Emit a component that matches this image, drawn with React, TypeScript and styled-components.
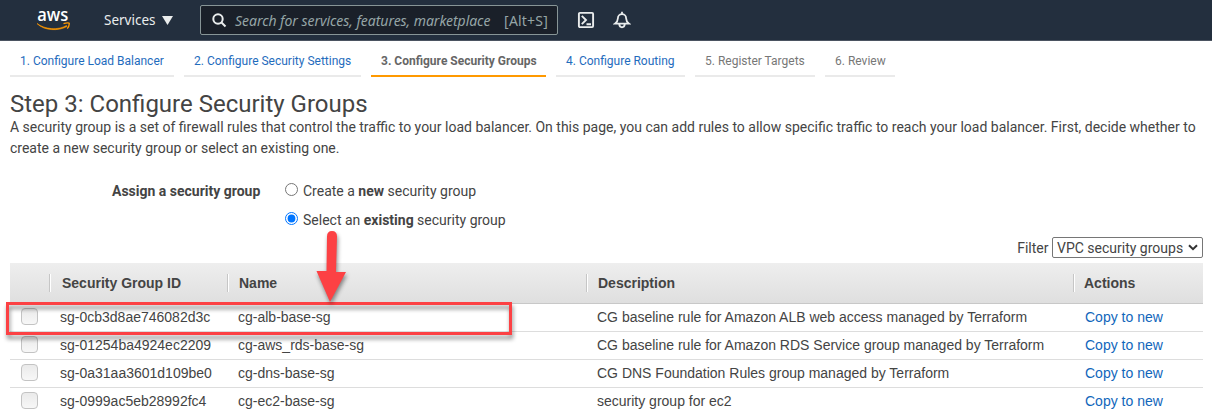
import React from "react";
import styled, { createGlobalStyle } from "styled-components";

const Global = createGlobalStyle`
  * { box-sizing: border-box; }
  html, body { margin: 0; height: 413px; overflow: hidden; background: #fff; }
  body { font-family: Roboto, "Liberation Sans", sans-serif; font-size: 14px; color: #444; }
`;

const Page = styled.div`
  position: relative;
  width: 1212px;
  height: 413px;
  overflow: hidden;
`;

const TopBar = styled.header`
  height: 41px;
  display: flex;
  align-items: center;
  background: #232f3e;
  border-bottom: 1px solid #4b5461;
  padding-left: 36px;
  font-family: "Noto Sans", "Open Sans", sans-serif;
  color: #eaeded;
`;

const Logo = styled.svg`
  width: 36px;
  height: 26px;
  margin-right: 32px;
  flex: none;
  overflow: visible;
`;

const Services = styled.div`
  display: flex;
  align-items: center;
  width: 96px;
  height: 40px;
  font-size: 13.500px;
  svg { margin-left: 6px; }
`;

const SearchBox = styled.div`
  display: flex;
  align-items: center;
  width: 358px;
  height: 30px;
  background: #1a2029;
  border: 1px solid #879596;
  border-radius: 2px;
  padding: 0 9px 0 11px;
  font-size: 14px;
  color: #95a5a6;
`;

const Placeholder = styled.span`
  width: 258px;
  margin-left: 8px;
  white-space: nowrap;
  font-style: italic;
  letter-spacing: -0.04px;
`;

const Shortcut = styled.span`
  margin-left: auto;
  font-size: 14px;
  letter-spacing: 0.2px;
`;

const TopIcon = styled.svg<{ $gap: number }>`
  width: 18px;
  height: 18px;
  margin-left: ${(p) => p.$gap}px;
  flex: none;
`;

const Steps = styled.nav`
  display: flex;
  gap: 10px;
  padding: 5px 0 0 10px;
`;

const Step = styled.div<{ $w: number; $state: "link" | "active" | "todo" }>`
  width: ${(p) => p.$w}px;
  height: 31px;
  padding-left: 10px;
  line-height: 30px;
  white-space: nowrap;
  font-size: 12px;
  font-weight: ${(p) => (p.$state === "active" ? 700 : 400)};
  color: ${(p) => (p.$state === "link" ? "#1f6cbd" : p.$state === "active" ? "#666" : "#777")};
  border-bottom: 2px solid ${(p) => (p.$state === "active" ? "#f90" : "#eaeaea")};
`;

const Title = styled.h1`
  margin: 14px 0 0 10px;
  height: 26px;
  line-height: 27px;
  font-size: 24px;
  font-weight: 400;
`;

const Intro = styled.p`
  margin: 0 0 0 10px;
  line-height: 21px;
  white-space: nowrap;
  font-size: 14px;
`;

const Form = styled.div`
  display: flex;
  margin-top: 22px;
  height: 58px;
`;

const FormLabel = styled.div`
  width: 285px;
  padding-left: 112px;
  line-height: 20px;
  font-weight: 700;
  white-space: nowrap;
`;

const Options = styled.div`
  display: flex;
  flex-direction: column;
  gap: 9px;
`;

const Option = styled.label`
  display: flex;
  height: 20px;
  line-height: 20px;
  white-space: pre;
  input { width: 13px; height: 13px; margin: 2px 5px 0 0; }
`;

const FilterRow = styled.div`
  display: flex;
  justify-content: flex-end;
  align-items: center;
  height: 21px;
  margin: -2px 9px 5px 0;
`;

const Select = styled.div`
  display: flex;
  align-items: center;
  justify-content: space-between;
  width: 151px;
  height: 21px;
  margin-left: 3.500px;
  padding: 0 4px 0 4px;
  border: 1px solid #767676;
  border-radius: 2px;
  line-height: 18px;
  white-space: nowrap;
`;

const Table = styled.div`
  width: 1193px;
  margin-left: 10px;
  font-family: "Liberation Sans", Arial, sans-serif;
`;

const columns = "39px 178px 359px 487px 130px";

const HeadRow = styled.div`
  display: grid;
  grid-template-columns: ${columns};
  align-items: center;
  height: 41px;
  background: linear-gradient(#eee, #dfdfdf);
  border-bottom: 1px solid #c8c8c8;
  font-weight: 700;
`;

const HeadCell = styled.div<{ $bar?: boolean; $pad?: number }>`
  height: 18px;
  line-height: 18px;
  padding-left: ${(p) => p.$pad ?? 11}px;
  border-left: 1px solid ${(p) => (p.$bar ? "#c6c6c6" : "transparent")};
  box-shadow: ${(p) => (p.$bar ? "inset 1px 0 #fff" : "none")};
`;

const Row = styled.div`
  display: grid;
  grid-template-columns: ${columns};
  height: 28px;
  line-height: 27px;
  border-bottom: 1px solid #ddd;
`;

const Cell = styled.div<{ $pad?: number }>`
  padding-left: ${(p) => p.$pad ?? 11}px;
  white-space: nowrap;
`;

const CopyLink = styled.a`
  color: #1166bb;
`;

const Check = styled.span`
  width: 17px;
  height: 17px;
  margin: 4px 0 0 11px;
  border: 1px solid #c3c3c3;
  border-radius: 4px;
  background: linear-gradient(#eaeaea, #f7f7f7);
`;

const Highlight = styled.div`
  position: absolute;
  left: 6px;
  top: 302px;
  width: 506px;
  height: 33px;
  border: 3px solid #fc4144;
  filter: drop-shadow(1px 4px 2px rgba(0, 0, 0, 0.45));
`;

const Arrow = styled.svg`
  position: absolute;
  left: 305px;
  top: 225px;
  filter: drop-shadow(1px 3px 2px rgba(0, 0, 0, 0.45));
`;

const steps: [string, number, "link" | "active" | "todo"][] = [
  ["1. Configure Load Balancer", 164, "link"],
  ["2. Configure Security Settings", 177, "link"],
  ["3. Configure Security Groups", 175, "active"],
  ["4. Configure Routing", 129, "link"],
  ["5. Register Targets", 120, "todo"],
  ["6. Review", 70, "todo"],
];

const groups = [
  ["sg-0cb3d8ae746082d3c", "cg-alb-base-sg", "CG baseline rule for Amazon ALB web access managed by Terraform"],
  ["sg-01254ba4924ec2209", "cg-aws_rds-base-sg", "CG baseline rule for Amazon RDS Service group managed by Terraform"],
  ["sg-0a31aa3601d109be0", "cg-dns-base-sg", "CG DNS Foundation Rules group managed by Terraform"],
  ["sg-0999ac5eb28992fc4", "cg-ec2-base-sg", "security group for ec2"],
];

export default function App() {
  return (
    <Page>
      <Global />
      <TopBar>
        <Logo viewBox="0 0 36 26">
          <text x="1.300" y="13.500" textLength="31" lengthAdjust="spacingAndGlyphs" fontFamily="Open Sans" fontWeight="600" fontSize="18" fill="#fff">aws</text>
          <path d="M1 16.500C9 22.500 22 23.500 30.500 18.500L31 19.500C23 24.200 8 24 1 16.500Z" fill="#f90" stroke="#f90" strokeWidth=".6" />
          <path d="M27.500 16.700C31 15.500 33.500 15.800 33.300 16.600C33.200 18.700 32.500 20.200 31.300 21.600" fill="none" stroke="#f90" strokeWidth="1.300" />
        </Logo>
        <Services>
          Services
          <svg width="11" height="9"><path d="M0 0H11L5.500 9Z" fill="#eaeded" /></svg>
        </Services>
        <SearchBox>
          <svg width="15" height="15" viewBox="0 0 15 15" fill="none" stroke="#eaeded" strokeWidth="2">
            <circle cx="6" cy="6" r="4.700" /><path d="M9.500 9.500L13.500 13.500" />
          </svg>
          <Placeholder>Search for services, features, marketplace</Placeholder>
          <Shortcut>[Alt+S]</Shortcut>
        </SearchBox>
        <TopIcon $gap={19} viewBox="0 0 18 18" fill="none" stroke="#eaeded" strokeWidth="1.900">
          <rect x="1.900" y="1.900" width="14.200" height="14.200" rx="1" />
          <path d="M4.800 4.800L9 9L4.800 13.200M9.500 13.200H14" />
        </TopIcon>
        <TopIcon $gap={18} viewBox="0 0 18 18" fill="none" stroke="#eaeded" strokeWidth="1.800">
          <path d="M9 0.800V3M2 12.600C4 11 4.900 9.500 4.900 7.200A4.100 4.100 0 0 1 13.100 7.200C13.100 9.500 14 11 16 12.600ZM6.200 13.200C6.700 17.300 11.300 17.300 11.800 13.200" />
        </TopIcon>
      </TopBar>
      <Steps>
        {steps.map(([label, w, state]) => (
          <Step key={label} $w={w} $state={state}>{label}</Step>
        ))}
      </Steps>
      <Title>Step 3: Configure Security Groups</Title>
      <Intro>
        A security group is a set of firewall rules that control the traffic to your load balancer. On this page, you can add rules to allow specific traffic to reach your load balancer. First, decide whether to
        <br />
        create a new security group or select an existing one.
      </Intro>
      <Form>
        <FormLabel>Assign a security group</FormLabel>
        <Options>
          <Option><input type="radio" name="sg" />Create a <b>new</b> security group</Option>
          <Option><input type="radio" name="sg" defaultChecked />Select an <b>existing</b> security group</Option>
        </Options>
      </Form>
      <FilterRow>
        Filter
        <Select>
          VPC security groups
          <svg width="10" height="7" viewBox="0 0 10 7"><path d="M1 1.200L5 5.200L9 1.200" fill="none" stroke="#333" strokeWidth="2" /></svg>
        </Select>
      </FilterRow>
      <Table>
        <HeadRow>
          <HeadCell />
          <HeadCell $bar $pad={12}>Security Group ID</HeadCell>
          <HeadCell $bar>Name</HeadCell>
          <HeadCell $bar>Description</HeadCell>
          <HeadCell $bar $pad={10}>Actions</HeadCell>
        </HeadRow>
        {groups.map(([id, name, desc]) => (
          <Row key={id}>
            <Check />
            <Cell>{id}</Cell>
            <Cell>{name}</Cell>
            <Cell>{desc}</Cell>
            <Cell $pad={12}><CopyLink>Copy to new</CopyLink></Cell>
          </Row>
        ))}
      </Table>
      <Highlight />
      <Arrow width="60" height="84">
        <path d="M22 11.500Q22 6 27 6Q32 6 32 11.500L31 47H41L25 77L11.500 46H21.500Z" fill="#fc4144" />
      </Arrow>
    </Page>
  );
}
